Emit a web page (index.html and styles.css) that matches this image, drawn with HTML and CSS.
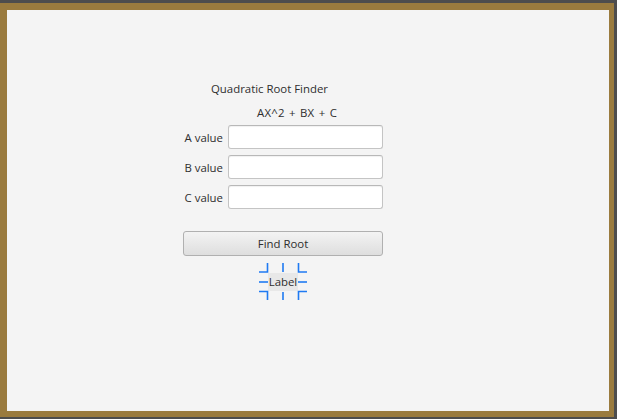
FILE: index.html
```html
<!DOCTYPE html>
<html>
<head>
<meta charset="utf-8">
<link rel="stylesheet" href="styles.css">
</head>
<body>
<div class="outer">
  <div class="frame">
    <div class="stage">
      <div class="column">
        <div class="title">Quadratic Root Finder</div>
        <div class="formula">AX^2 + BX + C</div>
        <div class="form">
          <label class="lbl">A value</label><div class="field"></div>
          <label class="lbl">B value</label><div class="field"></div>
          <label class="lbl">C value</label><div class="field"></div>
        </div>
        <button class="btn">Find Root</button>
        <div class="result-wrap">
          <span class="result">Label</span>
          <svg class="handles" width="50" height="40" viewBox="-10 -11 50 40">
            <g stroke="#1f7af2" stroke-width="1.6" fill="none">
              <path d="M-0.5 -10 V-1 H-9"/>
              <path d="M15 -10 V-1"/>
              <path d="M30.5 -10 V-1 H39"/>
              <path d="M-9 9 H0"/>
              <path d="M30 9 H39"/>
              <path d="M-9 18.5 H-0.5 V27"/>
              <path d="M15 19 V27"/>
              <path d="M39 18.5 H30.5 V27"/>
            </g>
          </svg>
        </div>
      </div>
    </div>
  </div>
</div>
</body>
</html>
```
FILE: styles.css
```css
* { box-sizing: border-box; }
html, body { margin: 0; padding: 0; }
body {
  background: #4d4d4d;
  width: 617px;
  height: 419px;
  overflow: hidden;
  font-family: "Open Sans", "Noto Sans", sans-serif;
  font-size: 11.4px;
  color: #2e2e2e;
}
.outer {
  padding: 3px 3px 2px 0;
  height: 419px;
}
.frame {
  background: #9a7b3e;
  padding: 7px 5px 6px 7px;
  height: 414px;
}
.stage {
  background: #f4f4f4;
  height: 401px;
}
.column {
  padding-top: 71px;
  margin-left: 176px;
  width: 200px;
}
.title {
  height: 16px;
  line-height: 16px;
  margin-left: 28px;
  white-space: nowrap;
}
.formula {
  height: 16px;
  line-height: 16px;
  margin-top: 8px;
  margin-left: 74px;
  white-space: nowrap;
  word-spacing: 1.2px;
  letter-spacing: 0.2px;
}
.form {
  margin-top: 4px;
  display: grid;
  grid-template-columns: 45px 155px;
  row-gap: 6px;
  align-items: center;
}
.lbl {
  text-align: right;
  padding-right: 5px;
  white-space: nowrap;
}
.field {
  height: 24px;
  background: #fff;
  border: 1px solid #c4c4c4;
  border-top-color: #b8b8b8;
  border-radius: 3px;
  box-shadow: inset 0 1px 1px rgba(0,0,0,0.06);
}
.btn {
  display: block;
  margin-top: 22px;
  width: 200px;
  height: 25px;
  font: inherit;
  color: #2e2e2e;
  border: 1px solid #b0b0b0;
  border-radius: 3px;
  background: linear-gradient(#f3f3f3, #dedede);
  padding: 0;
}
.result-wrap {
  position: relative;
  margin-top: 17px;
  margin-left: 85px;
  width: 30px;
  height: 18px;
}
.result {
  display: block;
  width: 30px;
  height: 18px;
  line-height: 18px;
  background: #e8e8e8;
  white-space: nowrap;
  text-align: center;
}
.handles {
  position: absolute;
  left: -10px;
  top: -11px;
}
```
